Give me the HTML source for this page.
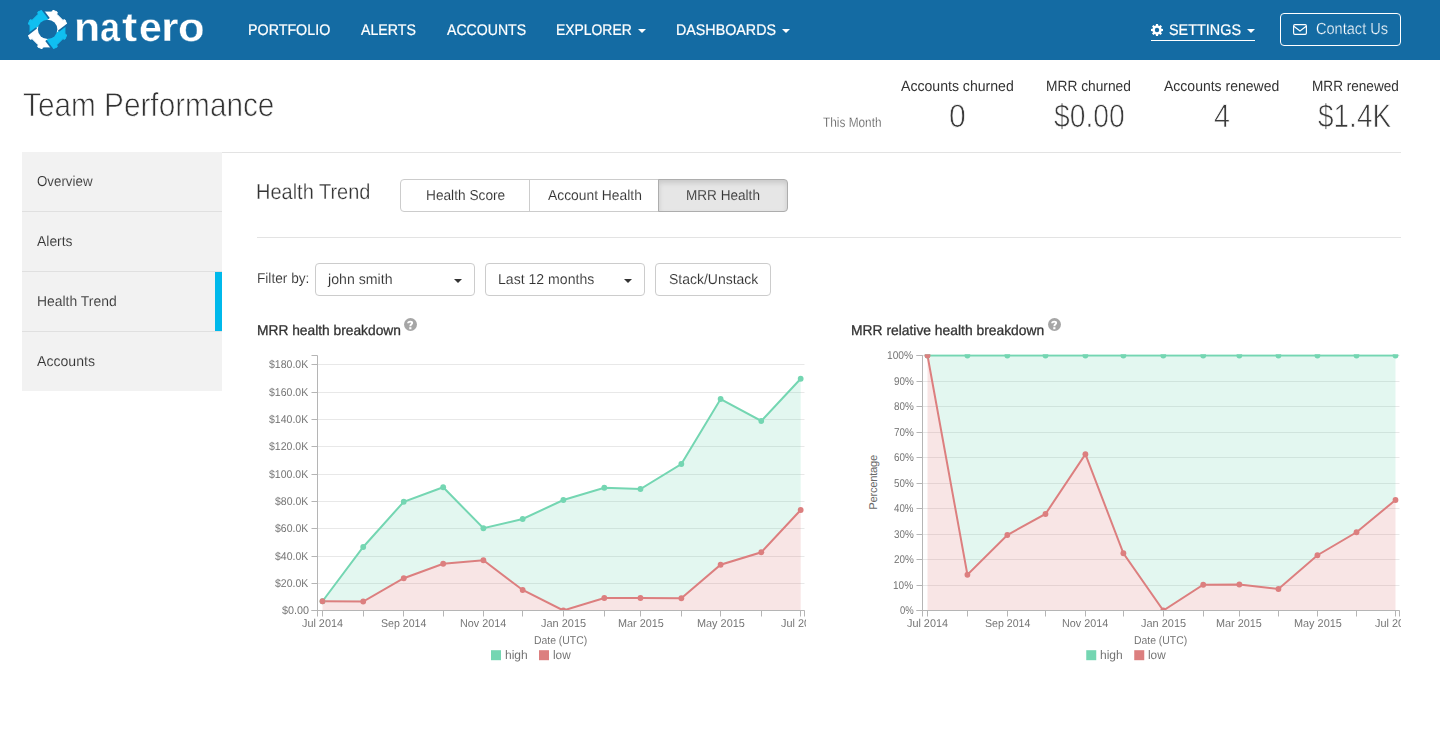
<!DOCTYPE html>
<html lang="en">
<head>
<meta charset="utf-8">
<title>Natero - Team Performance</title>
<style>
html,body{margin:0;padding:0;overflow:hidden;}
body{width:1440px;height:756px;position:relative;overflow:hidden;background:#fff;font-family:"Liberation Sans",sans-serif;text-rendering:geometricPrecision;}
.t{position:absolute;white-space:nowrap;line-height:1em;display:block;}
.abs{position:absolute;}
nav{position:absolute;left:0;top:0;width:1440px;height:60px;background:#146ba3;}
.thin{-webkit-text-stroke:0.75px #fff;}
.thin2{-webkit-text-stroke:0.5px #fff;}
.thin3{-webkit-text-stroke:0.3px #fff;}
.thin4{-webkit-text-stroke:0.15px #fff;}
.er{-webkit-text-stroke:0.1px #fff;}
.tk{-webkit-text-stroke:0.06px #fff;}
.ers{-webkit-text-stroke:0.1px #f2f2f2;}
.era{-webkit-text-stroke:0.1px #e6e6e6;}
.thinb{-webkit-text-stroke:0.3px #146ba3;}
.med{-webkit-text-stroke:0.3px currentColor;}
.medn{-webkit-text-stroke:0.22px currentColor;}
.side{position:absolute;left:22px;width:200px;height:59px;background:#f2f2f2;border-bottom:1px solid #e0e0e0;}
.btn{position:absolute;box-sizing:border-box;border:1px solid #ccc;background:#fff;border-radius:4px;}
.caret{position:absolute;width:0;height:0;border-left:4px solid transparent;border-right:4px solid transparent;border-top:4.5px solid #fff;}
.hr{position:absolute;height:1px;background:#e3e3e3;}
.help{position:absolute;width:12.4px;height:12.4px;border-radius:50%;background:#a8a8a8;color:#fff;font-size:10.5px;font-weight:bold;line-height:13px;text-align:center;}
</style>
</head>
<body>

<nav>
<svg class="abs" style="left:25px;top:7px" width="45" height="45" viewBox="-22.5 -22.5 45 45">
<defs><mask id="gm" maskUnits="userSpaceOnUse" x="-23" y="-23" width="46" height="46"><path d="M17.41,4.18 L19.23,5.51 L17.49,9.70 L15.26,9.35 L9.35,15.26 L9.70,17.49 L5.51,19.23 L4.18,17.41 L-4.18,17.41 L-5.51,19.23 L-9.70,17.49 L-9.35,15.26 L-15.26,9.35 L-17.49,9.70 L-19.23,5.51 L-17.41,4.18 L-17.41,-4.18 L-19.23,-5.51 L-17.49,-9.70 L-15.26,-9.35 L-9.35,-15.26 L-9.70,-17.49 L-5.51,-19.23 L-4.18,-17.41 L4.18,-17.41 L5.51,-19.23 L9.70,-17.49 L9.35,-15.26 L15.26,-9.35 L17.49,-9.70 L19.23,-5.51 L17.41,-4.18Z" fill="#fff" stroke="#fff" stroke-width="1.0" stroke-linejoin="round"/></mask></defs>
<g mask="url(#gm)">
<rect x="-23" y="-23" width="46" height="46" fill="#fff"/>
<polygon points="1.57,-10.99 -22.43,-42.99 -54.43,-18.99 -30.43,13.01" fill="#10bff1"/>
<polygon points="-1.57,10.99 22.43,42.99 54.43,18.99 30.43,-13.01" fill="#10bff1"/>
<g stroke="#146ba3" stroke-width="1.7"><line x1="1.57" y1="-10.99" x2="-22.43" y2="-42.99"/><line x1="10.99" y1="1.57" x2="42.99" y2="-22.43"/><line x1="-1.57" y1="10.99" x2="22.43" y2="42.99"/><line x1="-10.99" y1="-1.57" x2="-42.99" y2="22.43"/></g>
<circle cx="0.1" cy="-0.1" r="9.7" fill="#146ba3"/>
</g>
</svg>
<div id="wordmark">
<span class="t" style="left:73.73px;top:7.00px;font-size:40.5px;font-weight:bold;color:#fff;-webkit-text-stroke:0.4px #146ba3;transform-origin:0 0;transform:scaleX(1.0587)">n</span>
<span class="t" style="left:99.70px;top:7.00px;font-size:40.5px;font-weight:bold;color:#fff;-webkit-text-stroke:0.4px #146ba3;transform-origin:0 0;transform:scaleX(0.8868)">a</span>
<span class="t" style="left:122.22px;top:7.00px;font-size:40.5px;font-weight:bold;color:#fff;-webkit-text-stroke:0.4px #146ba3;transform-origin:0 0;transform:scaleX(1.1371)">t</span>
<span class="t" style="left:138.74px;top:7.00px;font-size:40.5px;font-weight:bold;color:#fff;-webkit-text-stroke:0.4px #146ba3;transform-origin:0 0;transform:scaleX(1.0117)">e</span>
<span class="t" style="left:160.77px;top:7.00px;font-size:40.5px;font-weight:bold;color:#fff;-webkit-text-stroke:0.4px #146ba3;transform-origin:0 0;transform:scaleX(1.1130)">r</span>
<span class="t" style="left:178.43px;top:7.00px;font-size:40.5px;font-weight:bold;color:#fff;-webkit-text-stroke:0.4px #146ba3;transform-origin:0 0;transform:scaleX(1.0755)">o</span>
</div>
<span class="t medn" style="left:247.61px;top:23.00px;font-size:15.4px;color:#fff;transform-origin:0 0;transform:scaleX(0.9276);">PORTFOLIO</span>
<span class="t medn" style="left:360.75px;top:23.00px;font-size:15.4px;color:#fff;transform-origin:0 0;transform:scaleX(0.9210);">ALERTS</span>
<span class="t medn" style="left:446.50px;top:23.00px;font-size:15.4px;color:#fff;transform-origin:0 0;transform:scaleX(0.9160);">ACCOUNTS</span>
<span class="t medn" style="left:555.64px;top:23.00px;font-size:15.4px;color:#fff;transform-origin:0 0;transform:scaleX(0.9032);">EXPLORER</span>
<span class="t medn" style="left:675.61px;top:23.00px;font-size:15.4px;color:#fff;transform-origin:0 0;transform:scaleX(0.9280);">DASHBOARDS</span>
<span class="t medn" style="left:1168.60px;top:23.00px;font-size:15.4px;color:#fff;transform-origin:0 0;transform:scaleX(0.9357);">SETTINGS</span>
<i class="caret" style="left:638.4px;top:28.6px"></i>
<i class="caret" style="left:782.0px;top:28.6px"></i>
<i class="caret" style="left:1247.4px;top:28.6px"></i>
<svg class="abs" style="left:1150px;top:23px" width="14" height="14" viewBox="-7 -7 14 14"><path fill="#fff" fill-rule="evenodd" d="M4.44,-1.19 L6.01,-1.06 L6.01,1.06 L4.44,1.19 L3.98,2.30 L5.00,3.50 L3.50,5.00 L2.30,3.98 L1.19,4.44 L1.06,6.01 L-1.06,6.01 L-1.19,4.44 L-2.30,3.98 L-3.50,5.00 L-5.00,3.50 L-3.98,2.30 L-4.44,1.19 L-6.01,1.06 L-6.01,-1.06 L-4.44,-1.19 L-3.98,-2.30 L-5.00,-3.50 L-3.50,-5.00 L-2.30,-3.98 L-1.19,-4.44 L-1.06,-6.01 L1.06,-6.01 L1.19,-4.44 L2.30,-3.98 L3.50,-5.00 L5.00,-3.50 L3.98,-2.30Z M2.2,0 A2.2,2.2 0 1 0 -2.2,0 A2.2,2.2 0 1 0 2.2,0Z"/></svg>
<div class="abs" style="left:1151px;top:40px;width:104px;height:1px;background:#fff"></div>
<div class="abs" style="left:1280px;top:13px;width:121px;height:33px;box-sizing:border-box;border:1px solid #fff;border-radius:4px"></div>
<svg class="abs" style="left:1292px;top:23px" width="16" height="14" viewBox="0 0 16 14"><rect x="1.6" y="1.6" width="12.8" height="9.7" rx="1.3" fill="none" stroke="#fff" stroke-width="1.15"/><path d="M1.8,3.2 L8,8.0 L14.2,3.2" fill="none" stroke="#fff" stroke-width="1.2"/></svg>
<span class="t thinb" style="left:1315.87px;top:21.00px;font-size:16.1px;color:#fff;transform-origin:0 0;transform:scaleX(0.9048);">Contact Us</span>
</nav>
<header>
<span class="t thin" style="left:22.90px;top:89.00px;font-size:33.2px;color:#333;transform-origin:0 0;transform:scaleX(0.8968);">Team Performance</span>
<span class="t thin3" style="left:822.76px;top:116.00px;font-size:13.8px;color:#444;transform-origin:0 0;transform:scaleX(0.8573);">This Month</span>
<span class="t" style="left:901.35px;top:80.00px;font-size:14.9px;color:#333;transform-origin:0 0;transform:scaleX(0.9459);">Accounts churned</span>
<span class="t" style="left:1046.00px;top:80.00px;font-size:14.9px;color:#333;transform-origin:0 0;transform:scaleX(0.9234);">MRR churned</span>
<span class="t" style="left:1163.85px;top:80.00px;font-size:14.9px;color:#333;transform-origin:0 0;transform:scaleX(0.9409);">Accounts renewed</span>
<span class="t" style="left:1311.51px;top:80.00px;font-size:14.9px;color:#333;transform-origin:0 0;transform:scaleX(0.9124);">MRR renewed</span>
<span class="t thin" style="left:949.29px;top:100.00px;font-size:32.6px;color:#3a3a3a;transform-origin:0 0;transform:scaleX(0.9266);">0</span>
<span class="t thin" style="left:1053.97px;top:100.00px;font-size:32.6px;color:#3a3a3a;transform-origin:0 0;transform:scaleX(0.8684);">$0.00</span>
<span class="t thin" style="left:1213.68px;top:100.00px;font-size:32.6px;color:#3a3a3a;transform-origin:0 0;transform:scaleX(0.8808);">4</span>
<span class="t thin" style="left:1318.47px;top:100.00px;font-size:32.6px;color:#3a3a3a;transform-origin:0 0;transform:scaleX(0.8587);">$1.4K</span>
<div class="hr" style="left:22px;top:152px;width:1379px"></div>
</header>
<aside>
<div class="side" style="top:152px;"></div>
<span class="t ers" style="left:36.70px;top:175.00px;font-size:14.4px;color:#333;transform-origin:0 0;transform:scaleX(0.9259);">Overview</span>
<div class="side" style="top:212px;"></div>
<span class="t ers" style="left:37.10px;top:235.00px;font-size:14.4px;color:#333;transform-origin:0 0;transform:scaleX(0.9673);">Alerts</span>
<div class="side" style="top:272px;"></div>
<span class="t ers" style="left:36.79px;top:295.00px;font-size:14.4px;color:#333;transform-origin:0 0;transform:scaleX(0.9670);">Health Trend</span>
<div class="side" style="top:332px;border-bottom:0;"></div>
<span class="t ers" style="left:37.10px;top:355.00px;font-size:14.4px;color:#333;transform-origin:0 0;transform:scaleX(0.9787);">Accounts</span>
<div class="abs" style="left:215px;top:272px;width:7px;height:59px;background:#00b9eb"></div>
</aside>
<main>
<span class="t thin3" style="left:256.40px;top:181.00px;font-size:21.8px;color:#333;transform-origin:0 0;transform:scaleX(0.9166);">Health Trend</span>
<div class="btn" style="left:400px;top:179px;width:130px;height:33px;border-radius:4px 0 0 4px"></div>
<div class="btn" style="left:529px;top:179px;width:130px;height:33px;border-radius:0"></div>
<div class="btn" style="left:658px;top:179px;width:130px;height:33px;border-radius:0 4px 4px 0;background:#e6e6e6;border-color:#adadad;box-shadow:inset 0 3px 5px rgba(0,0,0,.125)"></div>
<span class="t er" style="left:425.65px;top:189.00px;font-size:14.4px;color:#333;transform-origin:0 0;transform:scaleX(0.9517);">Health Score</span>
<span class="t er" style="left:547.50px;top:189.00px;font-size:14.4px;color:#333;transform-origin:0 0;transform:scaleX(0.9618);">Account Health</span>
<span class="t era" style="left:686.41px;top:189.00px;font-size:14.4px;color:#333;transform-origin:0 0;transform:scaleX(0.9434);">MRR Health</span>
<div class="hr" style="left:257px;top:237px;width:1144px"></div>
<span class="t er" style="left:256.91px;top:272.00px;font-size:14.4px;color:#333;transform-origin:0 0;transform:scaleX(0.9487);">Filter by:</span>
<div class="btn" style="left:315px;top:263px;width:160px;height:33px"></div>
<div class="btn" style="left:485px;top:263px;width:160px;height:33px"></div>
<div class="btn" style="left:655px;top:263px;width:116px;height:33px"></div>
<span class="t er" style="left:328.35px;top:273.00px;font-size:14.4px;color:#333;transform-origin:0 0;transform:scaleX(0.9844);">john smith</span>
<span class="t er" style="left:497.87px;top:273.00px;font-size:14.4px;color:#333;transform-origin:0 0;transform:scaleX(0.9784);">Last 12 months</span>
<span class="t er" style="left:668.62px;top:273.00px;font-size:14.4px;color:#333;transform-origin:0 0;transform:scaleX(0.9713);">Stack/Unstack</span>
<i class="caret" style="left:454.2px;top:278.6px;border-top-color:#333"></i>
<i class="caret" style="left:624.1px;top:278.6px;border-top-color:#333"></i>
<span class="t med" style="left:256.90px;top:323.00px;font-size:14.1px;color:#333;transform-origin:0 0;transform:scaleX(0.9773);">MRR health breakdown</span>
<span class="t med" style="left:851.39px;top:323.00px;font-size:14.1px;color:#333;transform-origin:0 0;transform:scaleX(0.9825);">MRR relative health breakdown</span>
<svg class="abs" style="left:404.2px;top:318.1px" width="13" height="13" viewBox="0 0 12.6 12.6"><circle cx="6.3" cy="6.3" r="6.3" fill="#a6a6a6"/><path d="M4.0,5.1 C4.0,4.0 4.9,3.5 6.1,3.5 C7.3,3.5 7.9,4.1 7.9,4.9 C7.9,6.2 6.15,6.1 6.15,7.9" fill="none" stroke="#fff" stroke-width="1.9"/><rect x="5.1" y="8.9" width="2.1" height="2.0" fill="#fff"/></svg>
<svg class="abs" style="left:1047.8px;top:318.1px" width="13" height="13" viewBox="0 0 12.6 12.6"><circle cx="6.3" cy="6.3" r="6.3" fill="#a6a6a6"/><path d="M4.0,5.1 C4.0,4.0 4.9,3.5 6.1,3.5 C7.3,3.5 7.9,4.1 7.9,4.9 C7.9,6.2 6.15,6.1 6.15,7.9" fill="none" stroke="#fff" stroke-width="1.9"/><rect x="5.1" y="8.9" width="2.1" height="2.0" fill="#fff"/></svg>
<section id="chart1">
<svg class="abs" style="left:0;top:0" width="807.5" height="700" viewBox="0 0 807.5 700">
<defs><clipPath id="cp317"><rect x="317.5" y="354.3" width="487.0" height="256.2"/></clipPath></defs>
<line x1="317.5" x2="804.5" y1="364.5" y2="364.5" stroke="#e8e8e8" stroke-width="1"/>
<line x1="317.5" x2="804.5" y1="392.5" y2="392.5" stroke="#e8e8e8" stroke-width="1"/>
<line x1="317.5" x2="804.5" y1="419.5" y2="419.5" stroke="#e8e8e8" stroke-width="1"/>
<line x1="317.5" x2="804.5" y1="446.5" y2="446.5" stroke="#e8e8e8" stroke-width="1"/>
<line x1="317.5" x2="804.5" y1="474.5" y2="474.5" stroke="#e8e8e8" stroke-width="1"/>
<line x1="317.5" x2="804.5" y1="501.5" y2="501.5" stroke="#e8e8e8" stroke-width="1"/>
<line x1="317.5" x2="804.5" y1="528.5" y2="528.5" stroke="#e8e8e8" stroke-width="1"/>
<line x1="317.5" x2="804.5" y1="556.5" y2="556.5" stroke="#e8e8e8" stroke-width="1"/>
<line x1="317.5" x2="804.5" y1="583.5" y2="583.5" stroke="#e8e8e8" stroke-width="1"/>
<line x1="317.5" x2="804.5" y1="610.5" y2="610.5" stroke="#e8e8e8" stroke-width="1"/>
<g clip-path="url(#cp317)">
<polygon points="322.50,601.25 363.21,547.00 403.75,501.75 443.18,487.25 483.39,528.25 522.66,519.00 563.36,500.00 604.30,487.75 640.47,489.00 681.34,464.00 720.61,399.00 761.31,421.00 800.68,378.75 800.68,510.00 761.31,552.25 720.61,564.75 681.34,598.25 640.47,598.00 604.30,598.00 563.36,610.50 522.66,590.00 483.39,560.25 443.18,563.75 403.75,578.25 363.21,601.50 322.50,601.25" fill="#74d6b2" fill-opacity="0.2"/>
<polygon points="322.50,610.5 322.50,601.25 363.21,601.50 403.75,578.25 443.18,563.75 483.39,560.25 522.66,590.00 563.36,610.50 604.30,598.00 640.47,598.00 681.34,598.25 720.61,564.75 761.31,552.25 800.68,510.00 800.68,610.5" fill="#dc7f7f" fill-opacity="0.2"/>
<polyline points="322.50,601.25 363.21,547.00 403.75,501.75 443.18,487.25 483.39,528.25 522.66,519.00 563.36,500.00 604.30,487.75 640.47,489.00 681.34,464.00 720.61,399.00 761.31,421.00 800.68,378.75" fill="none" stroke="#74d6b2" stroke-width="2"/>
<polyline points="322.50,601.25 363.21,601.50 403.75,578.25 443.18,563.75 483.39,560.25 522.66,590.00 563.36,610.50 604.30,598.00 640.47,598.00 681.34,598.25 720.61,564.75 761.31,552.25 800.68,510.00" fill="none" stroke="#dc7f7f" stroke-width="2"/>
<circle cx="322.50" cy="601.25" r="2.9" fill="#74d6b2"/>
<circle cx="363.21" cy="547.00" r="2.9" fill="#74d6b2"/>
<circle cx="403.75" cy="501.75" r="2.9" fill="#74d6b2"/>
<circle cx="443.18" cy="487.25" r="2.9" fill="#74d6b2"/>
<circle cx="483.39" cy="528.25" r="2.9" fill="#74d6b2"/>
<circle cx="522.66" cy="519.00" r="2.9" fill="#74d6b2"/>
<circle cx="563.36" cy="500.00" r="2.9" fill="#74d6b2"/>
<circle cx="604.30" cy="487.75" r="2.9" fill="#74d6b2"/>
<circle cx="640.47" cy="489.00" r="2.9" fill="#74d6b2"/>
<circle cx="681.34" cy="464.00" r="2.9" fill="#74d6b2"/>
<circle cx="720.61" cy="399.00" r="2.9" fill="#74d6b2"/>
<circle cx="761.31" cy="421.00" r="2.9" fill="#74d6b2"/>
<circle cx="800.68" cy="378.75" r="2.9" fill="#74d6b2"/>
<circle cx="322.50" cy="601.25" r="2.9" fill="#dc7f7f"/>
<circle cx="363.21" cy="601.50" r="2.9" fill="#dc7f7f"/>
<circle cx="403.75" cy="578.25" r="2.9" fill="#dc7f7f"/>
<circle cx="443.18" cy="563.75" r="2.9" fill="#dc7f7f"/>
<circle cx="483.39" cy="560.25" r="2.9" fill="#dc7f7f"/>
<circle cx="522.66" cy="590.00" r="2.9" fill="#dc7f7f"/>
<circle cx="563.36" cy="610.50" r="2.9" fill="#dc7f7f"/>
<circle cx="604.30" cy="598.00" r="2.9" fill="#dc7f7f"/>
<circle cx="640.47" cy="598.00" r="2.9" fill="#dc7f7f"/>
<circle cx="681.34" cy="598.25" r="2.9" fill="#dc7f7f"/>
<circle cx="720.61" cy="564.75" r="2.9" fill="#dc7f7f"/>
<circle cx="761.31" cy="552.25" r="2.9" fill="#dc7f7f"/>
<circle cx="800.68" cy="510.00" r="2.9" fill="#dc7f7f"/>
</g>
<path d="M311.5,355.5 H317.5 V610.5 H311.5" fill="none" stroke="#b5b5b5" stroke-width="1"/>
<path d="M317.5,616.5 V610.5 H804.5 V616.5" fill="none" stroke="#b5b5b5" stroke-width="1"/>
<line x1="311.5" x2="317.5" y1="364.5" y2="364.5" stroke="#b5b5b5" stroke-width="1"/>
<line x1="311.5" x2="317.5" y1="392.5" y2="392.5" stroke="#b5b5b5" stroke-width="1"/>
<line x1="311.5" x2="317.5" y1="419.5" y2="419.5" stroke="#b5b5b5" stroke-width="1"/>
<line x1="311.5" x2="317.5" y1="446.5" y2="446.5" stroke="#b5b5b5" stroke-width="1"/>
<line x1="311.5" x2="317.5" y1="474.5" y2="474.5" stroke="#b5b5b5" stroke-width="1"/>
<line x1="311.5" x2="317.5" y1="501.5" y2="501.5" stroke="#b5b5b5" stroke-width="1"/>
<line x1="311.5" x2="317.5" y1="528.5" y2="528.5" stroke="#b5b5b5" stroke-width="1"/>
<line x1="311.5" x2="317.5" y1="556.5" y2="556.5" stroke="#b5b5b5" stroke-width="1"/>
<line x1="311.5" x2="317.5" y1="583.5" y2="583.5" stroke="#b5b5b5" stroke-width="1"/>
<line x1="311.5" x2="317.5" y1="610.5" y2="610.5" stroke="#b5b5b5" stroke-width="1"/>
<line x1="322.5" x2="322.5" y1="610.5" y2="616.5" stroke="#b5b5b5" stroke-width="1"/>
<line x1="363.5" x2="363.5" y1="610.5" y2="616.5" stroke="#b5b5b5" stroke-width="1"/>
<line x1="403.5" x2="403.5" y1="610.5" y2="616.5" stroke="#b5b5b5" stroke-width="1"/>
<line x1="443.5" x2="443.5" y1="610.5" y2="616.5" stroke="#b5b5b5" stroke-width="1"/>
<line x1="483.5" x2="483.5" y1="610.5" y2="616.5" stroke="#b5b5b5" stroke-width="1"/>
<line x1="522.5" x2="522.5" y1="610.5" y2="616.5" stroke="#b5b5b5" stroke-width="1"/>
<line x1="563.5" x2="563.5" y1="610.5" y2="616.5" stroke="#b5b5b5" stroke-width="1"/>
<line x1="604.5" x2="604.5" y1="610.5" y2="616.5" stroke="#b5b5b5" stroke-width="1"/>
<line x1="640.5" x2="640.5" y1="610.5" y2="616.5" stroke="#b5b5b5" stroke-width="1"/>
<line x1="681.5" x2="681.5" y1="610.5" y2="616.5" stroke="#b5b5b5" stroke-width="1"/>
<line x1="720.5" x2="720.5" y1="610.5" y2="616.5" stroke="#b5b5b5" stroke-width="1"/>
<line x1="761.5" x2="761.5" y1="610.5" y2="616.5" stroke="#b5b5b5" stroke-width="1"/>
<line x1="800.5" x2="800.5" y1="610.5" y2="616.5" stroke="#b5b5b5" stroke-width="1"/>
<rect x="491" y="650.2" width="10" height="10" fill="#74d6b2"/>
<rect x="539" y="650.2" width="10" height="10" fill="#dc7f7f"/>
</svg>
<div class="abs" style="left:0;top:0;width:805.5px;height:700px;overflow:hidden">
<span class="t tk" style="left:302.34px;top:619.00px;font-size:11.3px;color:#686868;transform-origin:0 0;transform:scaleX(0.9596);">Jul 2014</span>
<span class="t tk" style="left:381.27px;top:619.00px;font-size:11.3px;color:#686868;transform-origin:0 0;transform:scaleX(0.9365);">Sep 2014</span>
<span class="t tk" style="left:460.27px;top:619.00px;font-size:11.3px;color:#686868;transform-origin:0 0;transform:scaleX(0.9550);">Nov 2014</span>
<span class="t tk" style="left:541.20px;top:619.00px;font-size:11.3px;color:#686868;transform-origin:0 0;transform:scaleX(0.9700);">Jan 2015</span>
<span class="t tk" style="left:617.60px;top:619.00px;font-size:11.3px;color:#686868;transform-origin:0 0;transform:scaleX(0.9593);">Mar 2015</span>
<span class="t tk" style="left:696.74px;top:619.00px;font-size:11.3px;color:#686868;transform-origin:0 0;transform:scaleX(0.9637);">May 2015</span>
<span class="t tk" style="left:780.52px;top:619.00px;font-size:11.3px;color:#686868;transform-origin:0 0;transform:scaleX(0.9622);">Jul 2015</span>
<span class="t tk" style="left:269.14px;top:360.00px;font-size:11.3px;color:#686868;transform-origin:0 0;transform:scaleX(0.9315);">$180.0K</span>
<span class="t tk" style="left:269.14px;top:388.00px;font-size:11.3px;color:#686868;transform-origin:0 0;transform:scaleX(0.9315);">$160.0K</span>
<span class="t tk" style="left:269.14px;top:415.00px;font-size:11.3px;color:#686868;transform-origin:0 0;transform:scaleX(0.9315);">$140.0K</span>
<span class="t tk" style="left:269.14px;top:442.00px;font-size:11.3px;color:#686868;transform-origin:0 0;transform:scaleX(0.9315);">$120.0K</span>
<span class="t tk" style="left:269.14px;top:470.00px;font-size:11.3px;color:#686868;transform-origin:0 0;transform:scaleX(0.9315);">$100.0K</span>
<span class="t tk" style="left:275.15px;top:497.00px;font-size:11.3px;color:#686868;transform-origin:0 0;transform:scaleX(0.9271);">$80.0K</span>
<span class="t tk" style="left:275.15px;top:524.00px;font-size:11.3px;color:#686868;transform-origin:0 0;transform:scaleX(0.9271);">$60.0K</span>
<span class="t tk" style="left:275.15px;top:552.00px;font-size:11.3px;color:#686868;transform-origin:0 0;transform:scaleX(0.9271);">$40.0K</span>
<span class="t tk" style="left:275.15px;top:579.00px;font-size:11.3px;color:#686868;transform-origin:0 0;transform:scaleX(0.9271);">$20.0K</span>
<span class="t tk" style="left:281.64px;top:606.00px;font-size:11.3px;color:#686868;transform-origin:0 0;transform:scaleX(0.9552);">$0.00</span>
<span class="t tk" style="left:534.07px;top:636.00px;font-size:11.3px;color:#686868;transform-origin:0 0;transform:scaleX(0.9206);">Date (UTC)</span>
<span class="t tk" style="left:504.66px;top:649.00px;font-size:12.3px;color:#686868;transform-origin:0 0;transform:scaleX(0.9775);">high</span>
<span class="t tk" style="left:552.93px;top:649.00px;font-size:12.3px;color:#686868;transform-origin:0 0;transform:scaleX(0.9598);">low</span>
</div>
</section>
<section id="chart2">
<svg class="abs" style="left:0;top:0" width="1402.5" height="700" viewBox="0 0 1402.5 700">
<defs><clipPath id="cp922"><rect x="922.5" y="354.3" width="477.0" height="256.2"/></clipPath></defs>
<line x1="922.5" x2="1399.5" y1="355.5" y2="355.5" stroke="#e8e8e8" stroke-width="1"/>
<line x1="922.5" x2="1399.5" y1="381.5" y2="381.5" stroke="#e8e8e8" stroke-width="1"/>
<line x1="922.5" x2="1399.5" y1="406.5" y2="406.5" stroke="#e8e8e8" stroke-width="1"/>
<line x1="922.5" x2="1399.5" y1="432.5" y2="432.5" stroke="#e8e8e8" stroke-width="1"/>
<line x1="922.5" x2="1399.5" y1="457.5" y2="457.5" stroke="#e8e8e8" stroke-width="1"/>
<line x1="922.5" x2="1399.5" y1="483.5" y2="483.5" stroke="#e8e8e8" stroke-width="1"/>
<line x1="922.5" x2="1399.5" y1="508.5" y2="508.5" stroke="#e8e8e8" stroke-width="1"/>
<line x1="922.5" x2="1399.5" y1="534.5" y2="534.5" stroke="#e8e8e8" stroke-width="1"/>
<line x1="922.5" x2="1399.5" y1="559.5" y2="559.5" stroke="#e8e8e8" stroke-width="1"/>
<line x1="922.5" x2="1399.5" y1="585.5" y2="585.5" stroke="#e8e8e8" stroke-width="1"/>
<line x1="922.5" x2="1399.5" y1="610.5" y2="610.5" stroke="#e8e8e8" stroke-width="1"/>
<g clip-path="url(#cp922)">
<polygon points="927.50,355.50 967.42,355.50 1007.33,355.50 1045.49,355.50 1085.40,355.50 1123.39,355.50 1163.31,355.50 1203.22,355.50 1239.36,355.50 1278.44,355.50 1317.43,355.50 1356.51,355.50 1395.50,355.50 1395.50,500.00 1356.51,532.25 1317.43,555.25 1278.44,589.00 1239.36,584.50 1203.22,584.75 1163.31,610.50 1123.39,553.25 1085.40,454.25 1045.49,514.00 1007.33,535.00 967.42,574.75 927.50,355.50" fill="#74d6b2" fill-opacity="0.2"/>
<polygon points="927.50,610.5 927.50,355.50 967.42,574.75 1007.33,535.00 1045.49,514.00 1085.40,454.25 1123.39,553.25 1163.31,610.50 1203.22,584.75 1239.36,584.50 1278.44,589.00 1317.43,555.25 1356.51,532.25 1395.50,500.00 1395.50,610.5" fill="#dc7f7f" fill-opacity="0.2"/>
<polyline points="927.50,355.50 967.42,355.50 1007.33,355.50 1045.49,355.50 1085.40,355.50 1123.39,355.50 1163.31,355.50 1203.22,355.50 1239.36,355.50 1278.44,355.50 1317.43,355.50 1356.51,355.50 1395.50,355.50" fill="none" stroke="#74d6b2" stroke-width="2"/>
<polyline points="927.50,355.50 967.42,574.75 1007.33,535.00 1045.49,514.00 1085.40,454.25 1123.39,553.25 1163.31,610.50 1203.22,584.75 1239.36,584.50 1278.44,589.00 1317.43,555.25 1356.51,532.25 1395.50,500.00" fill="none" stroke="#dc7f7f" stroke-width="2"/>
<circle cx="927.50" cy="355.50" r="2.9" fill="#74d6b2"/>
<circle cx="967.42" cy="355.50" r="2.9" fill="#74d6b2"/>
<circle cx="1007.33" cy="355.50" r="2.9" fill="#74d6b2"/>
<circle cx="1045.49" cy="355.50" r="2.9" fill="#74d6b2"/>
<circle cx="1085.40" cy="355.50" r="2.9" fill="#74d6b2"/>
<circle cx="1123.39" cy="355.50" r="2.9" fill="#74d6b2"/>
<circle cx="1163.31" cy="355.50" r="2.9" fill="#74d6b2"/>
<circle cx="1203.22" cy="355.50" r="2.9" fill="#74d6b2"/>
<circle cx="1239.36" cy="355.50" r="2.9" fill="#74d6b2"/>
<circle cx="1278.44" cy="355.50" r="2.9" fill="#74d6b2"/>
<circle cx="1317.43" cy="355.50" r="2.9" fill="#74d6b2"/>
<circle cx="1356.51" cy="355.50" r="2.9" fill="#74d6b2"/>
<circle cx="1395.50" cy="355.50" r="2.9" fill="#74d6b2"/>
<circle cx="927.50" cy="355.50" r="2.9" fill="#dc7f7f"/>
<circle cx="967.42" cy="574.75" r="2.9" fill="#dc7f7f"/>
<circle cx="1007.33" cy="535.00" r="2.9" fill="#dc7f7f"/>
<circle cx="1045.49" cy="514.00" r="2.9" fill="#dc7f7f"/>
<circle cx="1085.40" cy="454.25" r="2.9" fill="#dc7f7f"/>
<circle cx="1123.39" cy="553.25" r="2.9" fill="#dc7f7f"/>
<circle cx="1163.31" cy="610.50" r="2.9" fill="#dc7f7f"/>
<circle cx="1203.22" cy="584.75" r="2.9" fill="#dc7f7f"/>
<circle cx="1239.36" cy="584.50" r="2.9" fill="#dc7f7f"/>
<circle cx="1278.44" cy="589.00" r="2.9" fill="#dc7f7f"/>
<circle cx="1317.43" cy="555.25" r="2.9" fill="#dc7f7f"/>
<circle cx="1356.51" cy="532.25" r="2.9" fill="#dc7f7f"/>
<circle cx="1395.50" cy="500.00" r="2.9" fill="#dc7f7f"/>
</g>
<path d="M916.5,355.5 H922.5 V610.5 H916.5" fill="none" stroke="#b5b5b5" stroke-width="1"/>
<path d="M922.5,616.5 V610.5 H1399.5 V616.5" fill="none" stroke="#b5b5b5" stroke-width="1"/>
<line x1="916.5" x2="922.5" y1="355.5" y2="355.5" stroke="#b5b5b5" stroke-width="1"/>
<line x1="916.5" x2="922.5" y1="381.5" y2="381.5" stroke="#b5b5b5" stroke-width="1"/>
<line x1="916.5" x2="922.5" y1="406.5" y2="406.5" stroke="#b5b5b5" stroke-width="1"/>
<line x1="916.5" x2="922.5" y1="432.5" y2="432.5" stroke="#b5b5b5" stroke-width="1"/>
<line x1="916.5" x2="922.5" y1="457.5" y2="457.5" stroke="#b5b5b5" stroke-width="1"/>
<line x1="916.5" x2="922.5" y1="483.5" y2="483.5" stroke="#b5b5b5" stroke-width="1"/>
<line x1="916.5" x2="922.5" y1="508.5" y2="508.5" stroke="#b5b5b5" stroke-width="1"/>
<line x1="916.5" x2="922.5" y1="534.5" y2="534.5" stroke="#b5b5b5" stroke-width="1"/>
<line x1="916.5" x2="922.5" y1="559.5" y2="559.5" stroke="#b5b5b5" stroke-width="1"/>
<line x1="916.5" x2="922.5" y1="585.5" y2="585.5" stroke="#b5b5b5" stroke-width="1"/>
<line x1="916.5" x2="922.5" y1="610.5" y2="610.5" stroke="#b5b5b5" stroke-width="1"/>
<line x1="927.5" x2="927.5" y1="610.5" y2="616.5" stroke="#b5b5b5" stroke-width="1"/>
<line x1="967.5" x2="967.5" y1="610.5" y2="616.5" stroke="#b5b5b5" stroke-width="1"/>
<line x1="1007.5" x2="1007.5" y1="610.5" y2="616.5" stroke="#b5b5b5" stroke-width="1"/>
<line x1="1045.5" x2="1045.5" y1="610.5" y2="616.5" stroke="#b5b5b5" stroke-width="1"/>
<line x1="1085.5" x2="1085.5" y1="610.5" y2="616.5" stroke="#b5b5b5" stroke-width="1"/>
<line x1="1123.5" x2="1123.5" y1="610.5" y2="616.5" stroke="#b5b5b5" stroke-width="1"/>
<line x1="1163.5" x2="1163.5" y1="610.5" y2="616.5" stroke="#b5b5b5" stroke-width="1"/>
<line x1="1203.5" x2="1203.5" y1="610.5" y2="616.5" stroke="#b5b5b5" stroke-width="1"/>
<line x1="1239.5" x2="1239.5" y1="610.5" y2="616.5" stroke="#b5b5b5" stroke-width="1"/>
<line x1="1278.5" x2="1278.5" y1="610.5" y2="616.5" stroke="#b5b5b5" stroke-width="1"/>
<line x1="1317.5" x2="1317.5" y1="610.5" y2="616.5" stroke="#b5b5b5" stroke-width="1"/>
<line x1="1356.5" x2="1356.5" y1="610.5" y2="616.5" stroke="#b5b5b5" stroke-width="1"/>
<line x1="1395.5" x2="1395.5" y1="610.5" y2="616.5" stroke="#b5b5b5" stroke-width="1"/>
<rect x="1086.25" y="650.2" width="10" height="10" fill="#74d6b2"/>
<rect x="1134.25" y="650.2" width="10" height="10" fill="#dc7f7f"/>
</svg>
<div class="abs" style="left:0;top:0;width:1400.5px;height:700px;overflow:hidden">
<span class="t tk" style="left:907.34px;top:619.00px;font-size:11.3px;color:#686868;transform-origin:0 0;transform:scaleX(0.9596);">Jul 2014</span>
<span class="t tk" style="left:984.86px;top:619.00px;font-size:11.3px;color:#686868;transform-origin:0 0;transform:scaleX(0.9365);">Sep 2014</span>
<span class="t tk" style="left:1062.29px;top:619.00px;font-size:11.3px;color:#686868;transform-origin:0 0;transform:scaleX(0.9550);">Nov 2014</span>
<span class="t tk" style="left:1141.14px;top:619.00px;font-size:11.3px;color:#686868;transform-origin:0 0;transform:scaleX(0.9700);">Jan 2015</span>
<span class="t tk" style="left:1216.49px;top:619.00px;font-size:11.3px;color:#686868;transform-origin:0 0;transform:scaleX(0.9593);">Mar 2015</span>
<span class="t tk" style="left:1293.56px;top:619.00px;font-size:11.3px;color:#686868;transform-origin:0 0;transform:scaleX(0.9637);">May 2015</span>
<span class="t tk" style="left:1375.34px;top:619.00px;font-size:11.3px;color:#686868;transform-origin:0 0;transform:scaleX(0.9622);">Jul 2015</span>
<span class="t tk" style="left:887.23px;top:351.00px;font-size:11.3px;color:#686868;transform-origin:0 0;transform:scaleX(0.9030);">100%</span>
<span class="t tk" style="left:893.55px;top:377.00px;font-size:11.3px;color:#686868;transform-origin:0 0;transform:scaleX(0.8757);">90%</span>
<span class="t tk" style="left:893.55px;top:402.00px;font-size:11.3px;color:#686868;transform-origin:0 0;transform:scaleX(0.8757);">80%</span>
<span class="t tk" style="left:893.50px;top:428.00px;font-size:11.3px;color:#686868;transform-origin:0 0;transform:scaleX(0.8780);">70%</span>
<span class="t tk" style="left:893.50px;top:453.00px;font-size:11.3px;color:#686868;transform-origin:0 0;transform:scaleX(0.8780);">60%</span>
<span class="t tk" style="left:893.61px;top:479.00px;font-size:11.3px;color:#686868;transform-origin:0 0;transform:scaleX(0.8735);">50%</span>
<span class="t tk" style="left:893.80px;top:504.00px;font-size:11.3px;color:#686868;transform-origin:0 0;transform:scaleX(0.8645);">40%</span>
<span class="t tk" style="left:893.61px;top:530.00px;font-size:11.3px;color:#686868;transform-origin:0 0;transform:scaleX(0.8735);">30%</span>
<span class="t tk" style="left:893.50px;top:555.00px;font-size:11.3px;color:#686868;transform-origin:0 0;transform:scaleX(0.8780);">20%</span>
<span class="t tk" style="left:893.25px;top:581.00px;font-size:11.3px;color:#686868;transform-origin:0 0;transform:scaleX(0.8896);">10%</span>
<span class="t tk" style="left:899.62px;top:606.00px;font-size:11.3px;color:#686868;transform-origin:0 0;transform:scaleX(0.8397);">0%</span>
<span class="t tk" style="left:1134.07px;top:636.00px;font-size:11.3px;color:#686868;transform-origin:0 0;transform:scaleX(0.9206);">Date (UTC)</span>
<span class="t tk" style="left:1099.91px;top:649.00px;font-size:12.3px;color:#686868;transform-origin:0 0;transform:scaleX(0.9775);">high</span>
<span class="t tk" style="left:1148.18px;top:649.00px;font-size:12.3px;color:#686868;transform-origin:0 0;transform:scaleX(0.9598);">low</span>
<span class="t" style="left:877px;top:481.7px;font-size:11.3px;color:#686868;transform-origin:0 0;transform:rotate(-90deg) translate(-27.65px,-8px);letter-spacing:-0.321px">Percentage</span>
</div>
</section>
</main>
</body>
</html>
